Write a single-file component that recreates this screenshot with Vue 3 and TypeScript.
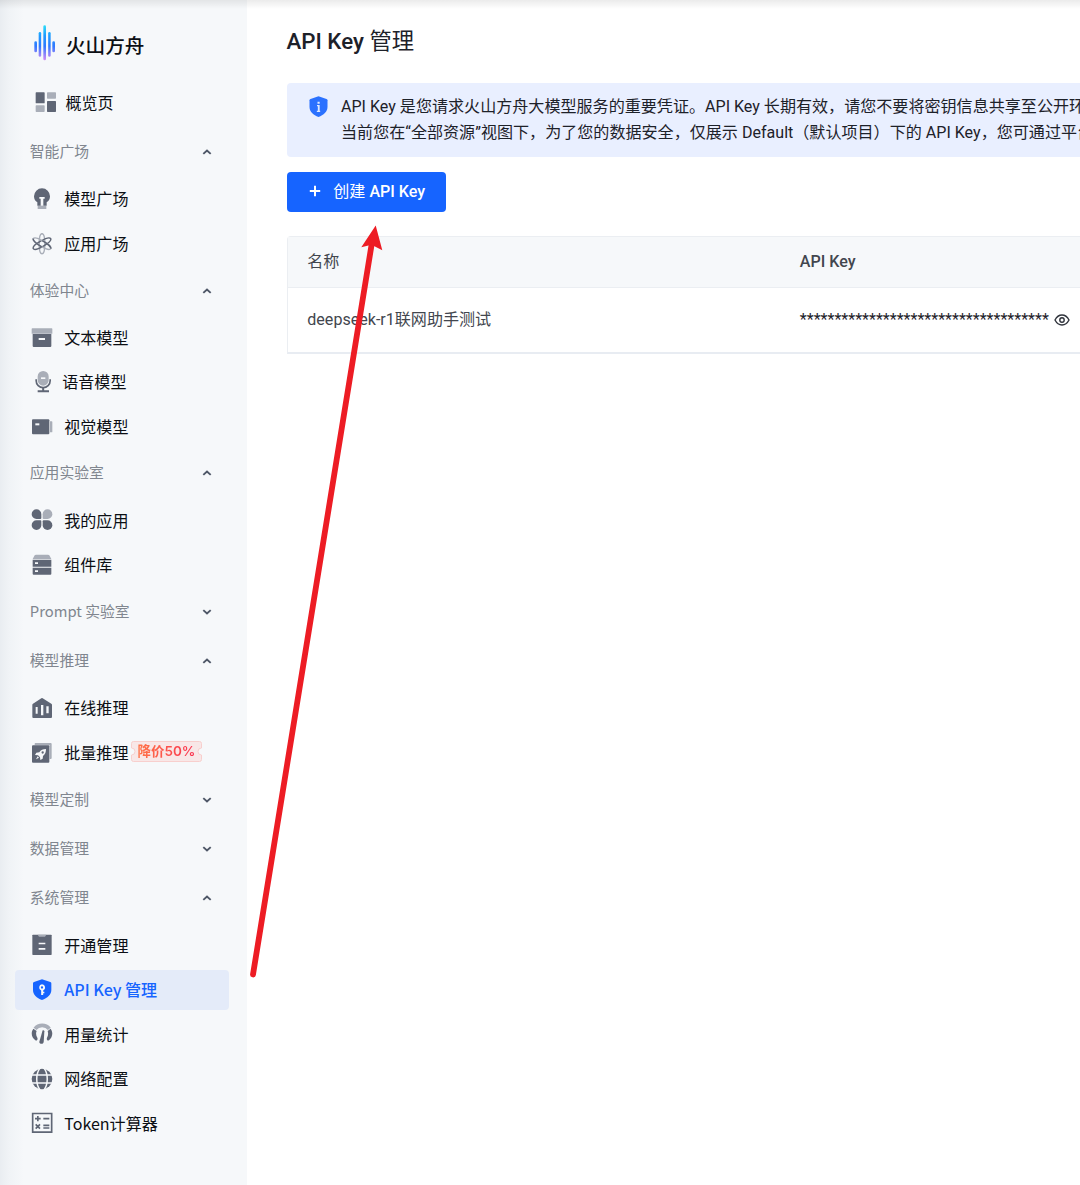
<script setup lang="ts">
type Tone = 'dark' | 'light' | 'paper' | 'brand'

interface Shape {
  d: string
  tone: Tone
  stroke?: number
  rotate?: number
}

interface NavItem {
  icon: string
  label: string
  badge?: string
  active?: boolean
}

interface NavGroup {
  title: string
  open: boolean
  items: NavItem[]
}

const icons: Record<string, Shape[]> = {
  overview: [
    { tone: 'dark', d: 'M4 4h23q2 0 2 2v29q0 2-2 2H4q-2 0-2-2V6q0-2 2-2zM38 30h23q2 0 2 2v29q0 2-2 2H38q-2 0-2-2V32q0-2 2-2z' },
    { tone: 'light', d: 'M38 4h23q2 0 2 2v15q0 2-2 2H38q-2 0-2-2V6q0-2 2-2zM4 43h23q2 0 2 2v16q0 2-2 2H4q-2 0-2-2V45q0-2 2-2z' },
  ],
  bulb: [
    { tone: 'dark', d: 'M33 1a24 24 0 0 1 24 24c0 9-4 14-10 18v10H19V43C13 39 9 34 9 25A24 24 0 0 1 33 1z' },
    { tone: 'paper', d: 'M25 27h16v5h-4v21h-8V32h-4z' },
    { tone: 'light', d: 'M20 54h26v9H20z' },
  ],
  atom: [
    { tone: 'light', stroke: 4.5, d: 'M33 2c5 0 8.500 13 8.500 30S38 62 33 62s-8.500-13-8.500-30S28 2 33 2z' },
    { tone: 'dark', stroke: 4.5, rotate: 60, d: 'M33 2c5 0 8.500 13 8.500 30S38 62 33 62s-8.500-13-8.500-30S28 2 33 2z' },
    { tone: 'light', stroke: 4.5, rotate: -60, d: 'M33 2c5 0 8.500 13 8.500 30S38 62 33 62s-8.500-13-8.500-30S28 2 33 2z' },
    { tone: 'dark', stroke: 4.5, rotate: -60, d: 'M24.500 36c-.5-18 3.500-34 8.500-34M41.500 28c.5 18-3.500 34-8.500 34' },
  ],
  box: [
    { tone: 'light', d: 'M4 4h58q2 0 2 2v14H2V6q0-2 2-2z' },
    { tone: 'dark', d: 'M5 21h56v36q0 3-3 3H8q-3 0-3-3z' },
    { tone: 'paper', d: 'M23 33h19v6H23z' },
  ],
  mic: [
    { tone: 'light', d: 'M33.500 0A16.500 16.500 0 0 1 50 16.500v11a16.500 16.500 0 0 1-33 0v-11A16.500 16.500 0 0 1 33.500 0z' },
    { tone: 'paper', d: 'M27 19h13v5H27z' },
    { tone: 'dark', stroke: 5, d: 'M12.500 25v4a21 21 0 0 0 42 0v-4' },
    { tone: 'dark', d: 'M30.500 50h6v8H51v6H17v-6h13.500z' },
  ],
  vision: [
    { tone: 'dark', d: 'M6 10h46q3 0 3 3v39q0 3-3 3H6q-3 0-3-3V13q0-3 3-3z' },
    { tone: 'light', d: 'M57 16h5q2 0 2 2v29q0 2-2 2h-5z' },
    { tone: 'paper', d: 'M13 22h12v6H13z' },
  ],
  clover: [
    { tone: 'dark', d: 'M16.500 1A14.500 14.500 0 0 0 2 15.500 14.500 14.500 0 0 0 16.500 30H28q3 0 3-3V15.500A14.500 14.500 0 0 0 16.500 1z' },
    { tone: 'light', d: 'M49.500 1A14.500 14.500 0 0 1 64 15.500 14.500 14.500 0 0 1 49.500 30H38q-3 0-3-3V15.500A14.500 14.500 0 0 1 49.500 1z' },
    { tone: 'dark', d: 'M16.500 63A14.500 14.500 0 0 1 2 48.500 14.500 14.500 0 0 1 16.500 34H28q3 0 3 3v11.500A14.500 14.500 0 0 1 16.500 63z' },
    { tone: 'dark', d: 'M49.500 63A14.500 14.500 0 0 0 64 48.500 14.500 14.500 0 0 0 49.500 34H38q-3 0-3 3v11.500A14.500 14.500 0 0 0 49.500 63z' },
  ],
  server: [
    { tone: 'light', d: 'M15 2h36q3 0 4 2l6 11H5l6-11q1-2 4-2z' },
    { tone: 'dark', d: 'M5 17h56v21H5zM5 41h56v18q0 3-3 3H8q-3 0-3-3z' },
    { tone: 'paper', d: 'M12 25h9v5h-9zM12 49h9v5h-9z' },
  ],
  house: [
    { tone: 'dark', d: 'M33 3q1 0 2 .8L61 20q2 1 2 3v37q0 3-3 3H7q-3 0-3-3V23q0-2 2-3L31 3.800q1-.8 2-.8z' },
    { tone: 'paper', d: 'M14 30h6v20h-6zM30 24h7v31h-7zM46 28h7v21h-7z' },
  ],
  rocket: [
    { tone: 'light', d: 'M13 3h46q3 0 3 3v42q0 3-3 3h-3V10H11V5q0-2 2-2z' },
    { tone: 'dark', d: 'M6 10h46q3 0 3 3v46q0 3-3 3H6q-3 0-3-3V13q0-3 3-3z' },
    { tone: 'paper', d: 'M45 21c0 9-2 16-9 21l-1 8-7 4-1-8-6-6-9-1 4-7 9-1c4-7 11-10 20-10zM20 43l4 4-9 5z' },
    { tone: 'dark', d: 'M35 28a3.500 3.500 0 1 1 0 7 3.500 3.500 0 0 1 0-7z' },
  ],
  clipboard: [
    { tone: 'dark', d: 'M6 2h54q2 0 2 2v57q0 2-2 2H6q-2 0-2-2V4q0-2 2-2z' },
    { tone: 'light', d: 'M20 2h26l-4 6H24z' },
    { tone: 'paper', d: 'M23 26h20v5H23zM23 42h20v5H23z' },
  ],
  shield: [
    { tone: 'brand', d: 'M33 1l25 8q3 1 3 4v20c0 14-12 24-28 30C17 57 6 47 6 33V13q0-3 3-4z' },
    { tone: 'paper', d: 'M33 16a9.500 9.500 0 0 1 3.500 18.300V38H40v5h-3.500v5h-6V34.300A9.500 9.500 0 0 1 33 16z' },
    { tone: 'brand', d: 'M33 22a3.500 3.500 0 1 1 0 7 3.500 3.500 0 0 1 0-7z' },
  ],
  gauge: [
    { tone: 'light', stroke: 11, d: 'M12 17.500a27 26 0 0 1 43 0' },
    { tone: 'dark', d: 'M7 17l10 7c-3 7-2 13 2 20 2 5-1 11-6 8C1 43-1 28 7 17zM59 17l-9 7c2 7 2 13-2 20-2 5 1 11 6 8C65 43 67 28 59 17z' },
    { tone: 'dark', d: 'M35 22q5-1 5 3l-2 32c-1 8-14 7-13-1z' },
  ],
  globe: [
    { tone: 'dark', d: 'M33 2a31 31 0 1 1 0 62 31 31 0 0 1 0-62z' },
    { tone: 'paper', stroke: 4.5, d: 'M3 21h60M3 45h60M27 0C14 17 14 49 27 66M39 0c13 17 13 49 0 66' },
  ],
  calculator: [
    { tone: 'dark', stroke: 5, d: 'M5 4.500h57v56H5z' },
    { tone: 'dark', stroke: 5, d: 'M12 20h17M20.500 12v16M37 20h18M14 37l13 13M27 37L14 50M37 40h18M37 48h18' },
  ],
}

const groups: NavGroup[] = [
  {
    title: '智能广场',
    open: true,
    items: [
      { icon: 'bulb', label: '模型广场' },
      { icon: 'atom', label: '应用广场' },
    ],
  },
  {
    title: '体验中心',
    open: true,
    items: [
      { icon: 'box', label: '文本模型' },
      { icon: 'mic', label: '语音模型' },
      { icon: 'vision', label: '视觉模型' },
    ],
  },
  {
    title: '应用实验室',
    open: true,
    items: [
      { icon: 'clover', label: '我的应用' },
      { icon: 'server', label: '组件库' },
    ],
  },
  { title: 'Prompt 实验室', open: false, items: [] },
  {
    title: '模型推理',
    open: true,
    items: [
      { icon: 'house', label: '在线推理' },
      { icon: 'rocket', label: '批量推理', badge: '降价50%' },
    ],
  },
  { title: '模型定制', open: false, items: [] },
  { title: '数据管理', open: false, items: [] },
  {
    title: '系统管理',
    open: true,
    items: [
      { icon: 'clipboard', label: '开通管理' },
      { icon: 'shield', label: 'API Key 管理', active: true },
      { icon: 'gauge', label: '用量统计' },
      { icon: 'globe', label: '网络配置' },
      { icon: 'calculator', label: 'Token计算器' },
    ],
  },
]

const maskedKey = '*'.repeat(36)
</script>

<template>
  <div class="page">
    <aside class="sidebar">
      <div class="logo">
        <svg class="logo-mark" viewBox="0 0 66 108">
          <defs>
            <linearGradient id="wave" gradientUnits="userSpaceOnUse" x1="0" y1="0" x2="0" y2="106">
              <stop offset="0" stop-color="#2fe0f8" />
              <stop offset="0.3" stop-color="#1f9bff" />
              <stop offset="0.6" stop-color="#2f78ff" />
              <stop offset="1" stop-color="#d48bf5" />
            </linearGradient>
          </defs>
          <g fill="url(#wave)">
            <rect x="1" y="49" width="8" height="33" rx="4" />
            <rect x="14" y="21" width="7.500" height="74" rx="3.700" />
            <rect x="28" y="1" width="8" height="105" rx="4" />
            <rect x="42.500" y="21" width="7.500" height="74" rx="3.700" />
            <rect x="55" y="49" width="8" height="33" rx="4" />
          </g>
        </svg>
        <span>火山方舟</span>
      </div>

      <nav>
        <div class="item overview">
          <svg class="icon" viewBox="0 0 66 66">
            <path v-for="(s, i) in icons.overview" :key="i" :d="s.d" :class="s.tone" />
          </svg>
          <span>概览页</span>
        </div>

        <section v-for="group in groups" :key="group.title">
          <header class="group-title">
            <span>{{ group.title }}</span>
            <svg class="chevron" viewBox="0 0 10 8">
              <path :d="group.open ? 'M1.300 5.900L5 2.500l3.700 3.400' : 'M1.300 2.100L5 5.500l3.700-3.400'" />
            </svg>
          </header>
          <div
            v-for="item in group.items"
            :key="item.label"
            class="item"
            :class="[item.icon, { active: item.active }]"
          >
            <svg class="icon" viewBox="0 0 66 66">
              <path
                v-for="(s, i) in icons[item.icon]"
                :key="i"
                :d="s.d"
                :class="[s.tone, { line: s.stroke }]"
                :stroke-width="s.stroke"
                :transform="s.rotate ? `rotate(${s.rotate} 33 32)` : undefined"
              />
            </svg>
            <span>{{ item.label }}</span>
            <span v-if="item.badge" class="badge">
              <svg viewBox="0 0 71 21">
                <path
                  d="M2.500.5h66q2 0 2 2v4.500a3.500 3.500 0 0 0 0 7v4.500q0 2-2 2h-66q-2 0-2-2V14a3.500 3.500 0 0 0 0-7V2.500q0-2 2-2z"
                />
              </svg>
              <b>{{ item.badge }}</b>
            </span>
          </div>
        </section>
      </nav>
    </aside>

    <main class="content">
      <h1>API Key <span class="regular">管理</span></h1>

      <div class="notice">
        <svg class="notice-icon" viewBox="0 0 57 66">
          <path class="notice-shield" d="M28.500 1l24 8q3 1 3 4v20c0 14-12 24-27 30C13 57 1.500 47 1.500 33V13q0-3 3-4z" />
          <path class="notice-mark" d="M25.500 17h6.500v6h-6.500zM24 27h8v17h1.500v4H23.500v-4h3V31H24z" />
        </svg>
        <div class="notice-text">
          <p>API Key 是您请求火山方舟大模型服务的重要凭证。API Key 长期有效，请您不要将密钥信息共享至公开环境</p>
          <p>当前您在“全部资源”视图下，为了您的数据安全，仅展示 Default（默认项目）下的 API Key，您可通过平台</p>
        </div>
      </div>

      <button class="create" type="button">
        <svg viewBox="0 0 12 12"><path d="M6 .8v10.400M.8 6h10.400" /></svg>
        <span><span class="regular">创建</span> API Key</span>
      </button>

      <div class="table">
        <div class="row head">
          <div class="name regular">名称</div>
          <div>API Key</div>
        </div>
        <div class="row">
          <div class="name">deepseek-r1联网助手测试</div>
          <div class="key">
            <span>{{ maskedKey }}</span>
            <svg viewBox="0 0 16 14">
              <path d="M1 7c1.700-3.300 4.100-5 7-5s5.300 1.700 7 5c-1.700 3.300-4.100 5-7 5S2.700 10.300 1 7z" />
              <circle cx="8" cy="7" r="2.200" />
            </svg>
          </div>
        </div>
      </div>
    </main>

    <svg class="pointer" viewBox="0 0 1080 1185">
      <path class="shaft" d="M253 974.500L371.700 244" />
      <path class="tip" d="M375.700 225.500L382.300 250.300 371.500 244.800 361.300 247.200z" />
    </svg>
    <div class="top-shade"></div>
  </div>
</template>

<style>
body {
  margin: 0;
  overflow: hidden;
}
</style>

<style scoped>
.page {
  position: relative;
  display: flex;
  width: 1080px;
  height: 1185px;
  overflow: hidden;
  background: #fff;
  font-family: Roboto, 'Noto Sans CJK SC', sans-serif;
  font-size: 16.07px;
  color: #1d2129;
}

.sidebar {
  box-sizing: border-box;
  flex: none;
  width: 247px;
  height: 100%;
  padding: 25px 18px 0 15px;
  background: linear-gradient(90deg, #e9edf1 0, #f0f3f6 9px, #f6f8fa 24px);
  font-family: 'Noto Sans CJK SC', sans-serif;
}

.logo {
  display: flex;
  align-items: center;
  height: 36px;
  margin-bottom: 19px;
  padding-left: 19px;
  font-size: 19.6px;
  font-weight: 500;
  line-height: 36px;
  color: #0c0f14;
}

.logo span {
  padding-top: 4px;
}

.logo-mark {
  width: 22px;
  height: 36px;
  margin-right: 10px;
}

nav,
section {
  display: flex;
  flex-direction: column;
}

.item {
  display: flex;
  align-items: center;
  box-sizing: border-box;
  height: 39.5px;
  margin: 2.5px 0;
  padding-left: 16px;
  border-radius: 4px;
  font-size: 16.05px;
  line-height: 39.5px;
  color: #0c0f14;
  white-space: nowrap;
}

.item.overview {
  margin-bottom: 5.5px;
  padding-left: 19.5px;
}

.overview .icon {
  margin-right: 9px;
}

.item.mic {
  padding-left: 17px;
}

.mic .icon {
  margin-right: 8.3px;
}

.item.active {
  background: #e4ebf9;
  color: #1664ff;
  font-weight: 500;
}

.icon {
  flex: none;
  width: 22px;
  height: 22px;
  margin-right: 11.3px;
}

.dark {
  fill: #5f6675;
}

.light {
  fill: #a9aeb8;
}

.paper {
  fill: #f6f8fa;
}

.brand {
  fill: #1664ff;
}

.notice-shield {
  fill: #2b71ff;
}

.notice-mark {
  fill: #dfe9ff;
}

.line {
  fill: none;
}

.line.dark {
  stroke: #5f6675;
}

.line.light {
  stroke: #a9aeb8;
}

.line.paper {
  stroke: #f6f8fa;
}

.group-title {
  display: flex;
  align-items: center;
  justify-content: space-between;
  height: 49.4px;
  padding: 0 17px 0 14.8px;
  font-size: 14.8px;
  color: #80868f;
}

.group-title span {
  padding-bottom: 2px;
  line-height: 24px;
}

.chevron {
  width: 10px;
  height: 8px;
}

.chevron path {
  fill: none;
  stroke: #4e5767;
  stroke-width: 1.9;
}

.badge {
  position: relative;
  top: -1.5px;
  display: flex;
  align-items: center;
  justify-content: center;
  width: 71px;
  height: 21px;
  margin-left: 2.5px;
}

.badge svg {
  position: absolute;
  width: 71px;
  height: 21px;
  fill: #f8e7e7;
  stroke: #f8cfcd;
  stroke-width: 1;
}

.badge b {
  position: relative;
  background: linear-gradient(90deg, #ff7548, #fa3250);
  background-clip: text;
  color: transparent;
  font-family: Inter, 'Noto Sans CJK SC', sans-serif;
  font-size: 13.5px;
  font-weight: 600;
  line-height: 21px;
}

.content {
  flex: 1;
  min-width: 0;
  padding-left: 39.5px;
}

.regular {
  font-weight: 400;
}

h1 {
  height: 40px;
  margin: 20.5px 0 22.5px;
  font-size: 22.3px;
  font-weight: 500;
  line-height: 40px;
  white-space: nowrap;
}

.notice {
  display: flex;
  box-sizing: border-box;
  width: 820px;
  height: 73.5px;
  padding: 10px 0 0 22.5px;
  border-radius: 4px;
  background: #e9efff;
}

.notice-icon {
  flex: none;
  width: 19px;
  height: 22px;
  margin: 2.5px 13px 0 0;
}

.notice-text {
  padding-top: 0.6px;
}

.notice-text p {
  margin: 0;
  line-height: 26.7px;
  white-space: nowrap;
}

.create {
  display: flex;
  align-items: center;
  width: 159.5px;
  height: 39.5px;
  margin: 15.5px 0 24.5px;
  padding: 0 0 0 22.5px;
  border: 0;
  border-radius: 4px;
  background: #1664ff;
  color: #fff;
  font-family: inherit;
  font-size: 16.07px;
  font-weight: 500;
  line-height: 39.5px;
  white-space: nowrap;
}

.create svg {
  width: 12px;
  height: 12px;
  margin: 0 12.3px 1px 0;
}

.create path {
  fill: none;
  stroke: #fff;
  stroke-width: 2;
}

.table {
  width: 820px;
  border: 1px solid #ebeef2;
  border-bottom: 2px solid #e8ecf2;
  border-radius: 4px 4px 0 0;
  box-sizing: border-box;
  color: #42464e;
}

.row {
  display: flex;
  align-items: center;
  height: 64px;
  padding-left: 19.8px;
  line-height: 24px;
  white-space: nowrap;
}

.row.head {
  height: 50px;
  border-bottom: 1px solid #ebeef2;
  background: #f6f8fa;
  font-weight: 500;
}

.name {
  width: 492.5px;
}

.row .name.regular {
  font-weight: 400;
}

.key {
  display: flex;
  align-items: center;
  color: #1d2129;
}

.key svg {
  width: 16px;
  height: 14px;
  margin-left: 5.2px;
  fill: none;
  stroke: #30343c;
  stroke-width: 1.4;
}

.pointer {
  position: absolute;
  inset: 0;
  width: 1080px;
  height: 1185px;
  pointer-events: none;
}

.shaft {
  fill: none;
  stroke: #ed1c24;
  stroke-width: 5.8;
  stroke-linecap: round;
}

.tip {
  fill: #ed1c24;
}

.top-shade {
  position: absolute;
  top: 0;
  left: 0;
  width: 100%;
  height: 9px;
  background: linear-gradient(rgba(0, 0, 0, 0.08), rgba(0, 0, 0, 0));
}
</style>
